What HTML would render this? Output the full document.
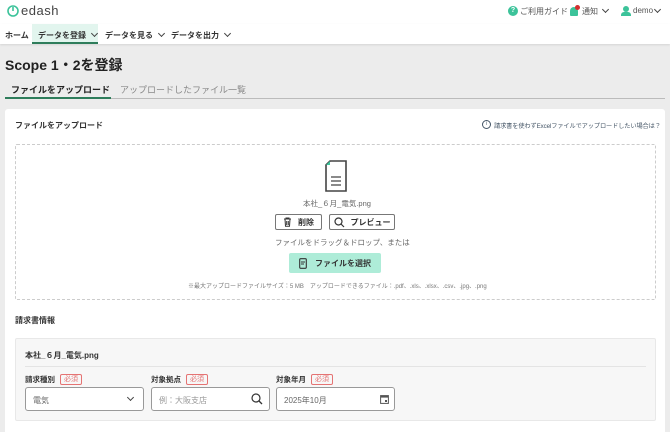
<!DOCTYPE html><html><head><meta charset="utf-8"><style>
*{margin:0;padding:0;box-sizing:border-box}
html,body{width:670px;height:432px;overflow:hidden}
body{background:#ececec;font-family:"Liberation Sans","Noto Sans CJK JP",sans-serif;color:#333;position:relative}
.a{position:absolute;white-space:nowrap}
.req{display:inline-block;border:1px solid #e57373;color:#e57373;font-size:7px;padding:0 3px;border-radius:2px;margin-left:5px;line-height:9px;vertical-align:1px;font-weight:normal}
.inp{position:absolute;top:387px;height:24px;width:119px;border:1px solid #999;border-radius:3px;background:#fff;font-size:8px;color:#666;padding:7px 7px}
.btn{position:absolute;top:214px;height:16px;border:1px solid #777;border-radius:2px;background:#fff;font-size:8px;font-weight:bold;display:flex;align-items:center;justify-content:center;gap:6px}
.chev{display:inline-block;width:5px;height:5px;border-right:1.2px solid #444;border-bottom:1.2px solid #444;transform:rotate(45deg);margin-left:6px;vertical-align:2px}
.hc{position:absolute;width:5px;height:5px;border-right:1.2px solid #444;border-bottom:1.2px solid #444;transform:rotate(45deg)}
</style></head><body>
<div class="a" style="left:0;top:0;width:670px;height:24px;background:#fff"></div>
<div class="a" style="left:0;top:24px;width:670px;height:20px;background:#fff;box-shadow:0 1px 2px rgba(0,0,0,.1)"></div>
<svg class="a" style="left:7px;top:5px" width="12" height="12" viewBox="0 0 12 12"><circle cx="6" cy="6" r="5" fill="none" stroke="#3cc39a" stroke-width="1.6"/><line x1="6" y1="2" x2="6" y2="6" stroke="#3cc39a" stroke-width="1.6"/></svg>
<div class="a" style="left:21px;top:3px;font-size:13px;color:#444;letter-spacing:.5px">edash</div>
<div class="a" style="left:508px;top:6px;width:10px;height:10px;border-radius:50%;background:#3cc39a;color:#fff;font-size:7px;text-align:center;line-height:10px;font-weight:bold">?</div>
<div class="a" style="left:520px;top:6px;font-size:8px;color:#555">ご利用ガイド</div>
<div class="a" style="left:570px;top:7px;width:8px;height:9px;border-radius:4px 4px 1px 1px;background:#3cc39a"></div>
<div class="a" style="left:575px;top:5px;width:5px;height:5px;border-radius:50%;background:#d32f2f"></div>
<div class="a" style="left:582px;top:6px;font-size:8px;color:#555">通知</div>
<div class="hc" style="left:603px;top:7px"></div>
<div class="a" style="left:623px;top:6px;width:6px;height:6px;border-radius:50%;background:#3cc39a"></div>
<div class="a" style="left:621px;top:12px;width:10px;height:4px;border-radius:3px 3px 0 0;background:#3cc39a"></div>
<div class="a" style="left:633px;top:6px;font-size:8px;color:#555">demo</div>
<div class="hc" style="left:655px;top:7px"></div>
<div class="a" style="left:5px;top:30px;font-size:8px;font-weight:bold">ホーム</div>
<div class="a" style="left:32px;top:24px;width:66px;height:20px;background:#e2f5ee;border-bottom:2px solid #2e7d5b"></div>
<div class="a" style="left:38px;top:30px;font-size:8px;font-weight:bold">データを登録<span class="chev"></span></div>
<div class="a" style="left:105px;top:30px;font-size:8px;font-weight:bold">データを見る<span class="chev"></span></div>
<div class="a" style="left:171px;top:30px;font-size:8px;font-weight:bold">データを出力<span class="chev"></span></div>
<div class="a" style="left:5px;top:55px;font-size:14px;font-weight:bold;color:#222">Scope 1・2を登録</div>
<div class="a" style="left:11px;top:83px;font-size:9px;font-weight:bold;color:#222">ファイルをアップロード</div>
<div class="a" style="left:120px;top:83px;font-size:9px;color:#888">アップロードしたファイル一覧</div>
<div class="a" style="left:5px;top:98px;width:660px;height:1px;background:#bbb"></div>
<div class="a" style="left:5px;top:97px;width:106px;height:2px;background:#2e7d5b"></div>
<div class="a" style="left:5px;top:109px;width:660px;height:330px;background:#fff;border-radius:3px"></div>
<div class="a" style="left:15px;top:120px;font-size:8px;font-weight:bold">ファイルをアップロード</div>
<div class="a" style="left:482px;top:120px;width:9px;height:9px;border:1px solid #456;border-radius:50%;font-size:5px;text-align:center;line-height:7px;color:#456">i</div>
<div class="a" style="left:494px;top:121px;font-size:6.2px;color:#456;letter-spacing:-.1px">請求書を使わずExcelファイルでアップロードしたい場合は？</div>
<div class="a" style="left:15px;top:144px;width:641px;height:156px;border:1px dashed #ccc;border-radius:2px"></div>
<svg class="a" style="left:324px;top:160px" width="24" height="33" viewBox="0 0 24 33"><path d="M6 1H22V31H2V5Z" fill="#fff" stroke="#444" stroke-width="1.6"/><path d="M2 5L6 1V5Z" fill="#3cc39a"/><path d="M7 17H17M7 21H17M7 25H17" stroke="#444" stroke-width="1.3"/></svg>
<div class="a" style="left:303px;top:198px;font-size:7.5px;color:#666">本社_６月_電気.png</div>
<div class="btn" style="left:275px;width:47px"><svg width="9" height="10" viewBox="0 0 9 10"><path d="M1 2H8M3 2V1H6V2M2 2L2.5 9.3H6.5L7 2M3.7 4V8M5.3 4V8" fill="none" stroke="#333" stroke-width="1"/></svg>削除</div>
<div class="btn" style="left:329px;width:66px"><svg width="11" height="11" viewBox="0 0 11 11"><circle cx="4.5" cy="4.5" r="3.5" fill="none" stroke="#333" stroke-width="1.2"/><line x1="7" y1="7" x2="10" y2="10" stroke="#333" stroke-width="1.2"/></svg>プレビュー</div>
<div class="a" style="left:275px;top:237px;font-size:7.5px;color:#666">ファイルをドラッグ＆ドロップ、または</div>
<div class="a" style="left:289px;top:253px;width:92px;height:20px;background:#aeecd8;border-radius:2px;font-size:8px;font-weight:bold;display:flex;align-items:center;justify-content:center;gap:8px"><svg width="8" height="11" viewBox="0 0 8 11"><rect x="0.7" y="0.7" width="6.6" height="9.6" rx="1" fill="none" stroke="#333" stroke-width="1.1"/><path d="M2 4H6M2 6H5" stroke="#333"/></svg>ファイルを選択</div>
<div class="a" style="left:188px;top:281px;font-size:6px;color:#777">※最大アップロードファイルサイズ：5 MB　アップロードできるファイル：.pdf、.xls、.xlsx、.csv、.jpg、.png</div>
<div class="a" style="left:15px;top:315px;font-size:8px;font-weight:bold">請求書情報</div>
<div class="a" style="left:15px;top:338px;width:641px;height:83px;background:#f7f7f7;border:1px solid #e8e8e8;border-radius:2px"></div>
<div class="a" style="left:25px;top:350px;font-size:8px;font-weight:bold">本社_６月_電気.png</div>
<div class="a" style="left:25px;top:366px;width:621px;height:1px;background:#e4e4e4"></div>
<div class="a" style="left:25px;top:374px;font-size:7.5px;font-weight:bold">請求種別<span class="req">必須</span></div>
<div class="a" style="left:151px;top:374px;font-size:7.5px;font-weight:bold">対象拠点<span class="req">必須</span></div>
<div class="a" style="left:276px;top:374px;font-size:7.5px;font-weight:bold">対象年月<span class="req">必須</span></div>
<div class="inp" style="left:25px">電気<span class="chev" style="position:absolute;right:10px;top:7px"></span></div>
<div class="inp" style="left:151px;color:#999">例：大阪支店<svg style="position:absolute;right:6px;top:5px" width="12" height="12" viewBox="0 0 12 12"><circle cx="5" cy="5" r="4" fill="none" stroke="#333" stroke-width="1.2"/><line x1="8" y1="8" x2="11" y2="11" stroke="#333" stroke-width="1.3"/></svg></div>
<div class="inp" style="left:276px">2025年10月<svg style="position:absolute;right:5px;top:6px" width="9" height="10" viewBox="0 0 9 10"><rect x="0.6" y="1.6" width="7.8" height="7.8" fill="none" stroke="#555" stroke-width="1"/><rect x="0.6" y="1.6" width="7.8" height="2" fill="#555"/><rect x="5" y="6" width="2" height="2" fill="#555"/></svg></div>
</body></html>
